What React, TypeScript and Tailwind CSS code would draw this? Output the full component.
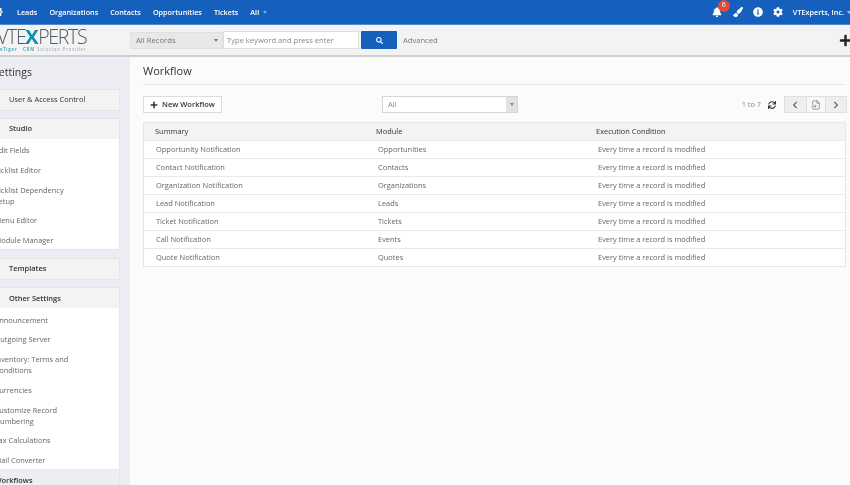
import React from 'react';
import { FaBell, FaChevronLeft, FaChevronRight, FaCog, FaHome, FaInfoCircle, FaPaintBrush, FaPlus, FaSearch, FaSync } from 'react-icons/fa';
import { FileInput } from 'lucide-react';

const navItems = ['Leads', 'Organizations', 'Contacts', 'Opportunities', 'Tickets'];

const rows = [
  ['Opportunity Notification', 'Opportunities'],
  ['Contact Notification', 'Contacts'],
  ['Organization Notification', 'Organizations'],
  ['Lead Notification', 'Leads'],
  ['Ticket Notification', 'Tickets'],
  ['Call Notification', 'Events'],
  ['Quote Notification', 'Quotes'],
];

const studioLinks = ['Edit Fields', 'Picklist Editor', 'Picklist Dependency Setup', 'Menu Editor', 'Module Manager'];
const otherLinks = [
  'Announcement',
  'Outgoing Server',
  'Inventory: Terms and Conditions',
  'Currencies',
  'Customize Record Numbering',
  'Tax Calculations',
  'Mail Converter',
];

const Caret = ({ className }: { className: string }) => (
  <span className={`inline-block border-x-[2.5px] border-t-[3px] border-x-transparent ${className}`} />
);

const CardHeader = ({ title, strong }: { title: string; strong?: boolean }) => (
  <div className={`flex h-[20px] items-center bg-[#f3f3f3] pl-[9px] text-[7.45px] text-[#333] ${strong ? 'font-semibold' : ''}`}>
    {title}
  </div>
);

const LinkList = ({ links }: { links: string[] }) => (
  <ul className="-mb-[1px] -ml-[5.5px] w-[84px] pt-[2px] text-[7.45px] leading-[11px] text-[#666]">
    {links.map((link) => (
      <li key={link} className="py-[4.35px]">
        {link}
      </li>
    ))}
  </ul>
);

export default function App() {
  return (
    <div className="flex h-screen w-screen flex-col overflow-hidden bg-[#fbfbfb] font-['Open_Sans',sans-serif] blur-[0.4px]">
      {/* Top nav */}
      <header className="flex h-[25px] shrink-0 items-center justify-between border-b border-[#4f8ad0] bg-[#1560bd] text-[7.25px] font-semibold text-white">
        <nav className="flex items-center">
          <FaHome className="-ml-[7px] mr-[14px] text-[10px]" />
          <div className="flex items-center gap-[12px]">
            {navItems.map((item) => (
              <span key={item}>{item}</span>
            ))}
            <span className="flex items-center gap-[4px]">
              All <Caret className="border-t-[#7ea8dc]" />
            </span>
          </div>
        </nav>
        <div className="relative flex items-center">
          <FaBell className="text-[10px]" />
          <span className="absolute -top-[7px] left-[6px] flex h-[12px] w-[12px] items-center justify-center rounded-full bg-[#dd4b39] text-[7px] font-normal">
            6
          </span>
          <FaPaintBrush className="ml-[11px] text-[10px]" />
          <FaInfoCircle className="ml-[10px] text-[10px]" />
          <FaCog className="ml-[10px] text-[10px]" />
          <span className="ml-[10px]">VTExperts, Inc.</span>
          <Caret className="ml-[3px] mr-[-1px] border-t-[#9dbde6]" />
        </div>
      </header>

      {/* Logo and search row */}
      <div className="flex h-[32px] shrink-0 items-center border-b-2 border-[#cfcfcf] bg-[#f3f3f3]">
        <div className="w-[130px] shrink-0 overflow-hidden">
          <div className="-ml-[3px] flex h-[16px] items-center text-[19.5px] font-light leading-none tracking-[-1.3px] text-[#4f5a62]">
            VTE<span className="text-[20px] font-bold tracking-[-0.5px] text-[#0f8fa8]">X</span>PERTS
          </div>
          <div className="mt-[1px] flex gap-[2px] whitespace-nowrap text-[4.5px] font-semibold leading-[6px] tracking-[0.7px] text-[#b0b5b8]">
            <span className="w-[21px] text-[#2b9cb4]">vTiger</span>
            <span className="text-[#2b9cb4]">CRM</span>
            <span>Solution Provider</span>
          </div>
        </div>
        <div className="flex h-[17px] w-[93px] items-center justify-between border border-[#e0e0e0] bg-[#e8e8e8] pl-[5px] pr-[4px] pt-[1px] text-[7.7px] text-[#777]">
          All Records
          <Caret className="border-t-[#777]" />
        </div>
        <div className="flex h-[18px] w-[136px] items-center border border-[#dedede] bg-white pl-[3px] pt-[1px] text-[7.6px] text-[#888]">
          Type keyword and press enter
        </div>
        <button className="ml-[2px] flex h-[18px] w-[36px] items-center justify-center rounded-[1px] bg-[#1560bd] text-white">
          <FaSearch className="text-[7px]" />
        </button>
        <span className="ml-[6px] pt-[1px] text-[7.6px] text-[#777]">Advanced</span>
        <FaPlus className="-mr-[2px] ml-auto text-[13px] text-[#222]" />
      </div>

      <div className="flex min-h-0 flex-1">
        {/* Settings sidebar */}
        <aside className="w-[130px] shrink-0 overflow-hidden bg-[#ebedf2] pr-[10px]">
          <h2 className="-ml-[7px] mt-[7px] text-[10.5px] leading-[16px] text-[#333]">Settings</h2>
          <div className="mt-[8.5px] flex flex-col gap-[7.5px]">
            <div className="border-y border-r border-[#e6e6e6]">
              <CardHeader title="User &amp; Access Control" />
            </div>
            <div className="border-y border-r border-[#e6e6e6] bg-white">
              <CardHeader title="Studio" strong />
              <LinkList links={studioLinks} />
            </div>
            <div className="border-y border-r border-[#e6e6e6]">
              <CardHeader title="Templates" strong />
            </div>
            <div className="border-y border-r border-[#e6e6e6] bg-white">
              <CardHeader title="Other Settings" strong />
              <LinkList links={otherLinks} />
              <div className="-ml-[5.5px] bg-[#eceef2] pb-[4px] pt-[6px] text-[7.45px] font-semibold text-[#333]">Workflows</div>
            </div>
          </div>
        </aside>

        {/* Workflow list */}
        <main className="min-w-0 flex-1 pl-[13px] pr-[4px]">
          <h1 className="flex h-[28px] items-center border-b border-[#e6e6e6] pt-[1px] text-[11px] text-[#333]">Workflow</h1>
          <div className="mt-[11px] flex h-[17px] items-center">
            <button className="flex h-[17px] w-[79px] items-center justify-center gap-[4px] border border-[#dcdcdc] bg-white text-[7.5px] font-semibold text-[#333]">
              <FaPlus className="text-[8px]" />
              New Workflow
            </button>
            <div className="ml-[160px] flex h-[17px] w-[136px] items-center justify-between border border-[#d5d5d5] bg-white pl-[5px] text-[7.6px] text-[#888]">
              All
              <span className="flex h-full w-[11px] items-center justify-center bg-[#e2e2e2]">
                <Caret className="border-t-[#888]" />
              </span>
            </div>
            <span className="ml-auto pt-[1px] text-[7.4px] text-[#888]">1 to 7</span>
            <FaSync className="ml-[7px] text-[8px] text-[#333]" />
            <div className="-mr-[1px] ml-[8px] flex h-[17px] w-[63px] items-center border border-[#e0e0e0] bg-[#eeeeee] text-[#666]">
              <span className="flex h-full flex-1 items-center justify-center">
                <FaChevronLeft className="text-[8px]" />
              </span>
              <span className="flex h-full w-[20px] items-center justify-center border-x border-[#dddddd] bg-[#f8f8f8]">
                <FileInput size={10} strokeWidth={1.5} />
              </span>
              <span className="flex h-full flex-1 items-center justify-center">
                <FaChevronRight className="text-[8px]" />
              </span>
            </div>
          </div>

          <div className="mt-[9px] border border-[#e6e6e6] bg-white text-[7.45px]">
            <div className="grid h-[17px] grid-cols-[221px_220px_1fr] items-center bg-[#f3f3f3] pl-[11px] text-[#333]">
              <span>Summary</span>
              <span>Module</span>
              <span>Execution Condition</span>
            </div>
            {rows.map(([summary, module]) => (
              <div
                key={summary}
                className="grid h-[18px] grid-cols-[222px_220px_1fr] items-center border-t border-[#e9e9e9] pl-[12px] text-[#666]"
              >
                <span>{summary}</span>
                <span>{module}</span>
                <span>Every time a record is modified</span>
              </div>
            ))}
          </div>
        </main>
      </div>
    </div>
  );
}
